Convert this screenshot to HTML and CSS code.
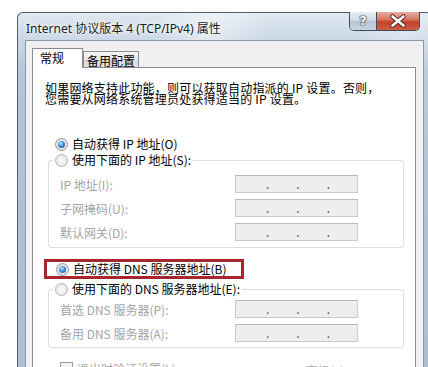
FILE: index.html
```html
<!DOCTYPE html>
<html lang="zh-CN">
<head>
<meta charset="utf-8">
<title>Internet 协议版本 4 (TCP/IPv4) 属性</title>
<link rel="stylesheet" href="styles.css">
</head>
<body>
<div class="window">
  <div class="titlebar">
    <span class="title">Internet 协议版本 4 (TCP/IPv4) 属性</span>
    <div class="caption">
      <span class="btn help">?</span>
      <span class="btn close">
        <svg width="42" height="18" viewBox="0 0 42 18">
          <path d="M15.5 4.5 L26.5 13.5 M26.5 4.5 L15.5 13.5" stroke="#5a2a22" stroke-width="4.6" stroke-linecap="round" fill="none"/>
          <path d="M15.5 4.5 L26.5 13.5 M26.5 4.5 L15.5 13.5" stroke="#ffffff" stroke-width="2.6" stroke-linecap="round" fill="none"/>
        </svg>
      </span>
    </div>
  </div>
  <div class="client">
    <div class="tabs">
      <span class="tab active">常规</span>
      <span class="tab other">备用配置</span>
    </div>
    <div class="panel">
      <p class="intro">如果网络支持此功能，则可以获取自动指派的 IP 设置。否则，<br>您需要从网络系统管理员处获得适当的 IP 设置。</p>
      <div class="opt first"><span class="radio checked"></span>自动获得 IP 地址(O)</div>
      <fieldset class="group g1">
        <legend><span class="radio"></span>使用下面的 IP 地址(S):</legend>
        <div class="row"><span class="lbl">IP 地址(I):</span><span class="ip"><i></i><b>.</b><i></i><b>.</b><i></i><b>.</b><i></i></span></div>
        <div class="row"><span class="lbl">子网掩码(U):</span><span class="ip"><i></i><b>.</b><i></i><b>.</b><i></i><b>.</b><i></i></span></div>
        <div class="row"><span class="lbl">默认网关(D):</span><span class="ip"><i></i><b>.</b><i></i><b>.</b><i></i><b>.</b><i></i></span></div>
      </fieldset>
      <div class="opt hl"><span class="radio checked"></span>自动获得 DNS 服务器地址(B)</div>
      <fieldset class="group g2">
        <legend><span class="radio"></span>使用下面的 DNS 服务器地址(E):</legend>
        <div class="row"><span class="lbl">首选 DNS 服务器(P):</span><span class="ip"><i></i><b>.</b><i></i><b>.</b><i></i><b>.</b><i></i></span></div>
        <div class="row"><span class="lbl">备用 DNS 服务器(A):</span><span class="ip"><i></i><b>.</b><i></i><b>.</b><i></i><b>.</b><i></i></span></div>
      </fieldset>
      <div class="bottom">
        <span class="check"></span>
        <span class="checklbl">退出时验证设置(L)</span>
        <span class="advbtn">高级(V)...</span>
      </div>
    </div>
  </div>
</div>
</body>
</html>
```
FILE: styles.css
```css
html, body {
  margin: 0;
  overflow: hidden;
}
body {
  width: 428px;
  height: 367px;
  box-sizing: border-box;
  padding: 12px 0 0 17px;
  background: #ffffff;
  font-family: "Noto Sans CJK SC", sans-serif;
  font-size: 12px;
  color: #000;
}
.window {
  width: 415px;
  height: 420px;
  box-sizing: border-box;
  border: 1px solid #4f5d6c;
  border-bottom: 0;
  border-radius: 6px 6px 0 0;
  padding: 0 7px;
  background:
    linear-gradient(100deg, rgba(255,255,255,0) 28%, rgba(255,255,255,0.45) 40%, rgba(255,255,255,0) 52%, rgba(255,255,255,0) 70%, rgba(255,255,255,0.3) 80%, rgba(255,255,255,0) 90%),
    linear-gradient(180deg, #dfe8f1 0, #cbd8e6 26px, #b3c5d8 60px, #aabdd2 100%);
}
.titlebar {
  display: flex;
  align-items: flex-start;
  height: 27px;
}
.title {
  margin: 8px 0 0 1px;
  line-height: 16px;
  font-family: "Noto Sans", "Noto Sans CJK SC", sans-serif;
  font-size: 12px;
  color: #1b1b1b;
  text-shadow: 0 0 5px #ffffff, 0 0 3px #ffffff;
  white-space: nowrap;
}
.caption {
  display: flex;
  height: 19px;
  box-sizing: border-box;
  margin: -1px 4px 0 auto;
  border: 1px solid #3e4b5a;
  border-top: 0;
  border-radius: 0 0 5px 5px;
  overflow: hidden;
}
.btn {
  display: block;
  height: 18px;
}
.help {
  width: 26px;
  border-right: 1px solid #3e4b5a;
  background: linear-gradient(180deg, #e9eef4 0, #d3dce6 45%, #b9c6d4 52%, #c8d3df 100%);
  color: #ffffff;
  font-family: "DejaVu Sans", sans-serif;
  font-weight: bold;
  font-size: 13px;
  line-height: 18px;
  text-align: center;
  text-shadow: 0 0 1px #333, 0 0 1px #333, 0 0 1px #333, 0 0 2px #555;
}
.close {
  width: 42px;
  background: linear-gradient(180deg, #e8ab9f 0, #d67a66 40%, #c2432c 55%, #cc5c43 100%);
}
.close svg {
  display: block;
}
.client {
  height: 400px;
  box-sizing: border-box;
  background: #f0f0f0;
  border: 1px solid #8b98a6;
  border-bottom: 0;
  padding: 7px 7px 0 6px;
}
.tabs {
  display: flex;
  align-items: flex-end;
  height: 20px;
  margin-bottom: -1px;
}
.tab {
  box-sizing: border-box;
  border: 1px solid #898c95;
  border-bottom: 0;
  white-space: nowrap;
}
.tab.active {
  width: 51px;
  height: 20px;
  padding-left: 7px;
  line-height: 18px;
  background: #ffffff;
}
.tab.other {
  width: 56px;
  height: 16px;
  margin-bottom: 1px;
  padding: 1px 0 0 3px;
  line-height: 15px;
  background: linear-gradient(180deg, #f4f4f4 0, #e6e6e6 50%, #d8d8d8 52%, #e4e4e4 100%);
}
.panel {
  height: 330px;
  box-sizing: border-box;
  background: #ffffff;
  border: 1px solid #898c95;
  padding-top: 14px;
}
.intro {
  margin: 0 0 0 12px;
  line-height: 11px;
  white-space: nowrap;
  letter-spacing: 0.2px;
}
.opt {
  display: flex;
  align-items: center;
  height: 16px;
  line-height: 16px;
  margin-left: 22px;
  white-space: nowrap;
}
.opt.first {
  margin-top: 32px;
}
.opt.hl {
  width: 200px;
  height: 20px;
  box-sizing: border-box;
  margin: 11px 0 0 11px;
  border: 3px solid #a6262f;
  padding-left: 9px;
}
.radio {
  flex: none;
  width: 13px;
  height: 13px;
  box-sizing: border-box;
  margin-right: 4px;
  border: 1px solid #9a9a9a;
  border-radius: 50%;
  background: radial-gradient(circle at 50% 50%, #f6f6f6 0, #e6e6e6 55%, #cfcfcf 100%);
  display: flex;
  align-items: center;
  justify-content: center;
}
legend .radio {
  border-color: #b5b5b5;
  background: radial-gradient(circle at 50% 50%, #fafafa 0, #ededed 55%, #dcdcdc 100%);
}
.radio.checked::after {
  content: "";
  width: 7px;
  height: 7px;
  border-radius: 50%;
  background: radial-gradient(circle at 40% 35%, #bfe8fc 0, #3d8fdb 45%, #17498f 100%);
}
.group {
  width: 356px;
  min-width: 0;
  box-sizing: border-box;
  margin: 0 0 0 15px;
  border: 1px solid #d5dfe5;
  border-radius: 3px;
  padding: 4px 0 3px 0;
}
.group.g2 {
  margin-top: 2px;
  padding: 0 0 2px 0;
}
legend {
  display: flex;
  align-items: center;
  height: 16px;
  line-height: 16px;
  margin-left: 4px;
  padding: 0 2px;
  white-space: nowrap;
}
.row {
  display: flex;
  align-items: center;
  height: 24px;
  padding-left: 11px;
  color: #a3a3a3;
  white-space: nowrap;
}
.lbl {
  width: 175px;
}
.ip {
  display: flex;
  width: 123px;
  height: 18px;
  box-sizing: border-box;
  padding-left: 3px;
  border: 1px solid #cacaca;
  border-top-color: #b9b9b9;
  background: #eeeeee;
  line-height: 16px;
}
.ip i {
  flex: 1;
}
.ip b {
  font-weight: normal;
  color: #555555;
}
.bottom {
  display: flex;
  align-items: flex-start;
  margin: 13px 0 0 27px;
  color: #a8a8a8;
  line-height: 16px;
  white-space: nowrap;
}
.check {
  width: 13px;
  height: 13px;
  box-sizing: border-box;
  margin-top: 1px;
  border: 1px solid #9a9a9a;
  background: #f4f4f4;
}
.checklbl {
  margin-left: 4px;
}
.advbtn {
  margin-left: 130px;
  padding: 2px 0 0 0;
}
```
